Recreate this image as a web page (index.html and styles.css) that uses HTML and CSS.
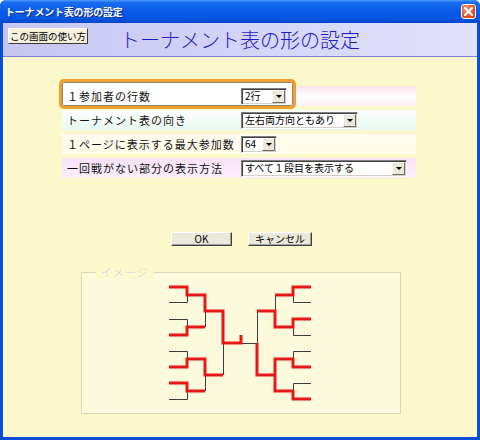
FILE: index.html
```html
<!DOCTYPE html>
<html lang="ja">
<head>
<meta charset="utf-8">
<title>トーナメント表の形の設定</title>
<link rel="stylesheet" href="styles.css">
</head>
<body>
<div class="window">
  <div class="titlebar">
    <span class="title">トーナメント表の形の設定</span>
    <span class="close">
      <svg width="9" height="9" viewBox="0 0 9 9"><path d="M1 1 L8 8 M8 1 L1 8" stroke="#fff" stroke-width="2" stroke-linecap="square"/></svg>
    </span>
  </div>
  <div class="client">
    <div class="header">
      <button class="help">この画面の使い方</button>
      <h1 class="heading">トーナメント表の形の設定</h1>
    </div>
    <div class="content">
      <div class="form">
        <div class="row r1">
          <span class="label">１参加者の行数</span>
          <div class="select s1"><span class="val">2行</span><span class="arrow"></span></div>
          <div class="focus"></div>
        </div>
        <div class="row r2">
          <span class="label">トーナメント表の向き</span>
          <div class="select s2"><span class="val">左右両方向ともあり</span><span class="arrow"></span></div>
        </div>
        <div class="row r3">
          <span class="label">１ページに表示する最大参加数</span>
          <div class="select s3"><span class="val">64</span><span class="arrow"></span></div>
        </div>
        <div class="row r4">
          <span class="label">一回戦がない部分の表示方法</span>
          <div class="select s4"><span class="val">すべて１段目を表示する</span><span class="arrow"></span></div>
        </div>
      </div>
      <div class="buttons">
        <button class="btn ok">OK</button>
        <button class="btn cancel">キャンセル</button>
      </div>
      <div class="group">
        <span class="legend">イメージ</span>
        <svg class="bracket" width="320" height="142" viewBox="81 273 320 142">
          <g fill="none" stroke="#3c3c3c" stroke-width="1">
            <path d="M169 303.5 H187.5 V296"/>
            <path d="M205.5 312 V328"/>
            <path d="M169 320.5 H187.5 V328"/>
            <path d="M223.5 344 V376"/>
            <path d="M169 352.5 H187.5 V360"/>
            <path d="M205.5 376 V392"/>
            <path d="M169 400.5 H187.5 V392"/>
            <path d="M241 344.5 H257.5 V312"/>
            <path d="M275.5 296 V312"/>
            <path d="M293.5 296 V303.5 H311"/>
            <path d="M293.5 328 V336.5 H311"/>
            <path d="M311 352.5 H293.5 V360"/>
            <path d="M311 384.5 H293.5 V392"/>
          </g>
          <g fill="none" stroke="#e81818" stroke-width="3" stroke-linejoin="miter">
            <path d="M169 288 H187 V296 H205 V312 H223 V344 H241 V336"/>
            <path d="M169 336 H187 V328 H205"/>
            <path d="M169 368 H187 V360 H205 V376 H223"/>
            <path d="M169 384 H187 V392 H205"/>
            <path d="M311 288 H293 V296 H275"/>
            <path d="M311 320 H293 V328 H275 V312 H257"/>
            <path d="M257 344 V376 H275"/>
            <path d="M311 368 H293 V360 H275 V392 H293 V400 H311"/>
          </g>
        </svg>
      </div>
    </div>
  </div>
</div>
</body>
</html>
```

FILE: styles.css
```css
* { box-sizing: border-box; }
html, body { margin: 0; padding: 0; }
body {
  width: 480px;
  height: 440px;
  overflow: hidden;
  font-family: "Noto Sans CJK JP", "Noto Sans", sans-serif;
  background: #fff;
}
.window {
  width: 480px;
  height: 440px;
  display: flex;
  flex-direction: column;
  background: #0a4fd8;
  border-radius: 6px 6px 0 0;
  overflow: hidden;
}
.titlebar {
  height: 23px;
  flex: none;
  display: flex;
  align-items: center;
  justify-content: space-between;
  padding: 0 4px 0 5px;
  background: linear-gradient(180deg, #4f9bff 0%, #1a6ef0 10%, #0a5ce8 45%, #0656e2 80%, #0447c8 100%);
}
.title {
  color: #fff;
  font-size: 10px;
  font-weight: bold;
  letter-spacing: -0.2px;
  text-shadow: 1px 1px 0 #0a2a8a;
}
.close {
  width: 15px;
  height: 15px;
  display: flex;
  align-items: center;
  justify-content: center;
  border: 1px solid #fff;
  border-radius: 3px;
  background: radial-gradient(circle at 35% 30%, #f39a78 0%, #e2582c 55%, #c7401a 100%);
}
.client {
  flex: 1;
  margin: 0 3px 3px 3px;
  display: flex;
  flex-direction: column;
  background: #fbf8cb;
}
.header {
  height: 34px;
  flex: none;
  display: flex;
  align-items: center;
  padding-left: 5px;
  background: linear-gradient(90deg, #c6c6f2 0%, #d6d6f8 60%, #e2e2fc 100%);
  border-bottom: 1px solid #7c7cd8;
}
.help {
  align-self: flex-start;
  margin-top: 5px;
  width: 80px;
  height: 16px;
  padding: 0;
  font-family: "Noto Sans CJK JP", sans-serif;
  font-size: 9.5px;
  line-height: 14px;
  white-space: nowrap;
  overflow: hidden;
  color: #000;
  background: #f5f1dc;
  border: 1px solid;
  border-color: #fff #3a3a3a #3a3a3a #fff;
}
.heading {
  margin: 0 0 0 32px;
  font-size: 20px;
  font-weight: 300;
  line-height: 24px;
  color: #1c1cc4;
  letter-spacing: 0;
}
.content {
  flex: 1;
  display: flex;
  flex-direction: column;
  padding-top: 29px;
}
.form {
  margin-left: 59px;
  width: 354px;
  display: flex;
  flex-direction: column;
  gap: 4px;
}
.row {
  position: relative;
  height: 20px;
  display: grid;
  grid-template-columns: 179px auto;
  align-items: center;
  justify-items: start;
}
.r1 { background: linear-gradient(180deg, #fbe3ee 0%, #fff 55%, #fdf0f4 100%); }
.r2 { background: linear-gradient(180deg, #fff 0%, #e6f9ef 100%); }
.r3 { background: linear-gradient(180deg, #fffdf0 0%, #fffbe6 100%); }
.r4 { background: linear-gradient(180deg, #f8e2f8 0%, #fbeefb 100%); }
.label {
  padding-left: 5px;
  font-size: 11px;
  letter-spacing: 1px;
  color: #111;
  white-space: nowrap;
  position: relative;
  z-index: 1;
}
.select {
  position: relative;
  z-index: 1;
  height: 17px;
  display: flex;
  align-items: center;
  background: #fff;
  border: 1px solid;
  border-color: #808080 #fff #fff #808080;
  box-shadow: inset 1px 1px 0 #404040, inset -1px -1px 0 #d4d0c8;
}
.s1 { width: 46px; }
.s2 { width: 117px; }
.s3 { width: 36px; }
.s4 { width: 166px; }
.val {
  flex: 1;
  padding-left: 3px;
  font-size: 10px;
  line-height: 14px;
  color: #000;
  white-space: nowrap;
  overflow: hidden;
}
.arrow {
  flex: none;
  width: 13px;
  height: 13px;
  margin-right: 1px;
  display: flex;
  align-items: center;
  justify-content: center;
  background: #ece9d8;
  border: 1px solid;
  border-color: #fff #6a6a6a #6a6a6a #fff;
}
.arrow::after {
  content: "";
  width: 0;
  height: 0;
  border-left: 3px solid transparent;
  border-right: 3px solid transparent;
  border-top: 3px solid #000;
}
.focus {
  position: absolute;
  left: -3px;
  top: -7px;
  width: 237px;
  height: 30px;
  border: 3px solid #f0a02c;
  border-radius: 5px;
  box-shadow: inset 0 0 0 1px #8c8470;
  background: #fff;
  z-index: 0;
}
.buttons {
  margin-top: 54px;
  margin-left: 168px;
  display: flex;
  gap: 16px;
}
.btn {
  height: 14px;
  padding: 0;
  font-family: "Noto Sans CJK JP", sans-serif;
  font-size: 10px;
  line-height: 12px;
  color: #000;
  background: #ece9d8;
  border: 1px solid;
  border-color: #fff #404040 #404040 #fff;
  box-shadow: inset -1px -1px 0 #a0a0a0;
}
.ok { width: 61px; }
.cancel { width: 64px; }
.group {
  position: relative;
  margin-top: 26px;
  margin-left: 78px;
  width: 320px;
  height: 142px;
  border: 1px solid #dcd8b4;
  background: #fcfadc;
}
.legend {
  position: absolute;
  left: 14px;
  top: -8px;
  padding: 0 5px;
  font-size: 11px;
  letter-spacing: 1px;
  line-height: 14px;
  color: #e0dcbc;
  text-shadow: 1px 1px 0 #fff;
  background: #fbf8cb;
}
.bracket {
  position: absolute;
  left: -1px;
  top: -1px;
}
```
